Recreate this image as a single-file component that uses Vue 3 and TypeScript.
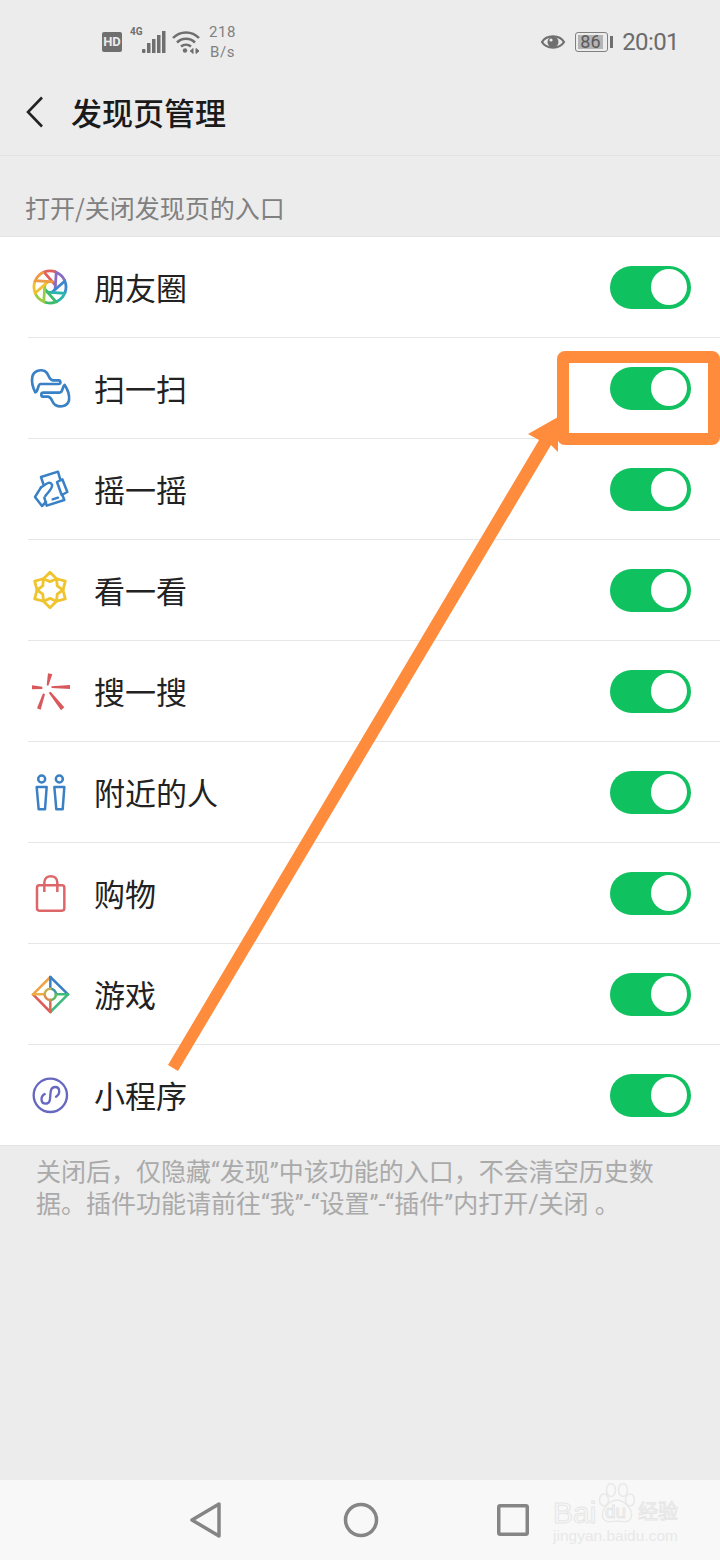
<script setup lang="ts">
interface Entry {
  key: string
  label: string
}

const entries: Entry[] = [
  { key: 'moments', label: '朋友圈' },
  { key: 'scan', label: '扫一扫' },
  { key: 'shake', label: '摇一摇' },
  { key: 'look', label: '看一看' },
  { key: 'search', label: '搜一搜' },
  { key: 'nearby', label: '附近的人' },
  { key: 'shop', label: '购物' },
  { key: 'game', label: '游戏' },
  { key: 'mini', label: '小程序' }
]

const polar = (cx: number, cy: number, r: number, deg: number) => {
  const a = (deg * Math.PI) / 180
  return `${(cx + r * Math.cos(a)).toFixed(2)} ${(cy + r * Math.sin(a)).toFixed(2)}`
}

// 光圈图标的彩色分段
const palette = ['#e2605c', '#8a6cc4', '#3f86cf', '#2bb3b0', '#3dbb6c', '#9ccb45', '#efc030', '#ee9b45']
const blades = palette.map((color, i) => {
  const start = -112 + i * 45
  return {
    color,
    d: `M${polar(22, 22, 6, start + 100)} L${polar(22, 22, 16, start)} A16 16 0 0 1 ${polar(22, 22, 16, start + 45)}`
  }
})

// 看一看的六个花瓣
const petals = [-90, -30, 30, 90, 150, 210].map((deg) =>
  `M${polar(90, 90, 53, deg)} L${polar(90, 90, 39, deg + 30)} L${polar(90, 90, 25, deg)} L${polar(90, 90, 39, deg - 30)} Z`
)
</script>

<template>
  <div class="page">
    <div class="status">
      <span class="hd">HD</span>
      <span class="net">4G</span>
      <svg class="signal" width="24" height="24" viewBox="0 0 24 24" fill="#6f6f6f">
        <rect x="0" y="19" width="3.5" height="4" rx="1" />
        <rect x="5" y="13" width="3.5" height="10" />
        <rect x="10" y="9" width="3.5" height="14" />
        <rect x="15" y="5" width="3.5" height="18" />
        <rect x="20" y="1" width="3.5" height="22" />
      </svg>
      <svg class="wifi" width="28" height="24" viewBox="0 0 28 24" fill="none" stroke="#6f6f6f" stroke-width="2.5">
        <path d="M1 8C8 0.5 20 0.5 27 8" />
        <path d="M5 12.5C10 7.5 18 7.5 23 12.5" />
        <path d="M9 16.5C12 14 16 14 19 16.5" />
        <circle cx="13" cy="20.5" r="2.2" fill="#6f6f6f" stroke="none" />
        <path d="M18 21h3M21 18.5L18.5 21L21 23.5ZM24 18.5V23.5L27 21Z" fill="#6f6f6f" stroke-width="1" />
      </svg>
      <div class="speed"><span>218</span><span>B/s</span></div>
      <div class="status-right">
        <svg width="26" height="20" viewBox="0 0 26 20" fill="none">
          <path d="M2 10C6.5 2.5 19.5 2.5 24 10C19.5 17.5 6.5 17.5 2 10Z" stroke="#6f6f6f" stroke-width="2.2" />
          <circle cx="13" cy="10" r="5.5" fill="#6f6f6f" />
          <circle cx="11" cy="8" r="1.6" fill="#ececec" />
        </svg>
        <div class="battery">
          <div class="cell"><span>86</span></div>
          <i class="tip"></i>
        </div>
        <span class="time">20:01</span>
      </div>
    </div>

    <header class="bar">
      <svg width="18" height="32" viewBox="0 0 18 32" fill="none" stroke="#222" stroke-width="2.6">
        <path d="M16 1.5L2 16L16 30.5" />
      </svg>
      <h1>发现页管理</h1>
    </header>

    <p class="section">打开/关闭发现页的入口</p>

    <ul class="list">
      <li v-for="item in entries" :key="item.key" class="row">
        <svg v-if="item.key === 'moments'" class="icon" viewBox="0 0 44 44" fill="none" stroke-width="2.8">
          <path v-for="b in blades" :key="b.color" :d="b.d" :stroke="b.color" />
        </svg>
        <svg v-else-if="item.key === 'scan'" class="icon" viewBox="24 348 132 132" fill="none" stroke="#3a80c4" stroke-width="8" stroke-linejoin="round">
          <path d="M46 427C38 412 35 392 37 380C40 364 60 357 74 363C88 370 84 388 98 391L116 391C123 392 123 402 116 402L62 402C52 402 56 424 46 427Z" />
          <path d="M134 405C143 418 149 436 147 451C142 470 120 473 106 465C94 458 98 442 84 440L70 440C62 440 62 428 70 428L118 428C130 427 126 410 134 405Z" />
        </svg>
        <svg v-else-if="item.key === 'shake'" class="icon" viewBox="24 651 132 132" fill="none" stroke="#3a80c4" stroke-width="7.5" stroke-linejoin="round" stroke-linecap="round">
          <path d="M70 702L63 681L114 665L120 686" />
          <path d="M111 696L127 688L142 726L125 735Z" />
          <path d="M127 735L133 750L80 767L73 743" />
          <path d="M63 712L45 741L66 768L78 756" />
          <path d="M63 712C76 704 90 690 96 704C99 716 84 726 76 738" />
          <path d="M98 748L114 743" />
        </svg>
        <svg v-else-if="item.key === 'look'" class="icon" viewBox="24 24 132 132" fill="none" stroke="#efc42e" stroke-width="8.5" stroke-linejoin="round">
          <path v-for="p in petals" :key="p" :d="p" />
        </svg>
        <svg v-else-if="item.key === 'search'" class="icon" viewBox="24 327 132 132" fill="#d9585b">
          <path d="M84 340L97 343L85 377L80 376Z" />
          <path d="M94 379L150 375L150 387L95 384Z" />
          <path d="M36 376L67 380L67 387L36 388Z" />
          <path d="M69 400L75 403L62 449L51 445Z" />
          <path d="M86 398L92 395L133 442L123 451Z" />
        </svg>
        <svg v-else-if="item.key === 'nearby'" class="icon" viewBox="24 630 132 132" fill="none" stroke="#3a80c4" stroke-width="7.5" stroke-linejoin="round">
          <circle cx="65" cy="657" r="10.5" />
          <circle cx="118" cy="657" r="10.5" />
          <path d="M50 681H80L75 748H56Z" />
          <path d="M103 681H133L128 748H109Z" />
        </svg>
        <svg v-else-if="item.key === 'shop'" class="icon" viewBox="24 33 132 132" fill="none" stroke="#dd6668" stroke-width="7.5" stroke-linejoin="round">
          <rect x="51" y="76" width="82" height="76" rx="7" />
          <path d="M73 96V68C73 42 112 42 112 68V96" />
        </svg>
        <svg v-else-if="item.key === 'game'" class="icon" viewBox="24 336 132 132" fill="none" stroke-width="7.5" stroke-linejoin="round" stroke-linecap="round">
          <path d="M91 351L39 403" stroke="#eea445" />
          <path d="M91 351L144 403" stroke="#3a80c4" />
          <path d="M144 403L91 456" stroke="#3dbb7c" />
          <path d="M91 456L39 403" stroke="#dd5b5b" />
          <path d="M91 351V386" stroke="#3a80c4" />
          <path d="M39 403H74" stroke="#eeb045" />
          <path d="M108 403H144" stroke="#3dbb7c" />
          <path d="M91 420V456" stroke="#d96a50" />
          <path d="M91 386A17 17 0 0 1 108 403" stroke="#3a9a9c" />
          <path d="M108 403A17 17 0 0 1 91 420" stroke="#5cbb5c" />
          <path d="M91 420A17 17 0 0 1 74 403" stroke="#dd8a50" />
          <path d="M74 403A17 17 0 0 1 91 386" stroke="#c8b050" />
        </svg>
        <svg v-else class="icon" viewBox="24 639 132 132" fill="none" stroke="#6668c0" stroke-width="7" stroke-linecap="round">
          <circle cx="91" cy="706" r="50" />
          <path d="M74 702C60 710 62 731 77 731C91 731 90 718 91 706C92 694 92 681 106 681C120 681 122 702 108 710" />
        </svg>
        <span class="label">{{ item.label }}</span>
        <span class="toggle"><i></i></span>
      </li>
    </ul>

    <p class="note">关闭后，仅隐藏“发现”中该功能的入口，不会清空历史数据。插件功能请前往“我”-“设置”-“插件”内打开/关闭 。</p>

    <nav class="keys">
      <svg width="35" height="38" viewBox="0 0 35 38" fill="none" stroke="#858585" stroke-width="3.5" stroke-linejoin="round">
        <path d="M29 3V35L2 19Z" />
      </svg>
      <svg width="36" height="36" viewBox="0 0 36 36" fill="none" stroke="#858585" stroke-width="3.5">
        <circle cx="18" cy="18" r="15.5" />
      </svg>
      <svg width="32" height="32" viewBox="0 0 32 32" fill="none" stroke="#858585" stroke-width="3.5" stroke-linejoin="round">
        <rect x="1.75" y="1.75" width="28.5" height="28.5" rx="1.5" />
      </svg>
    </nav>

    <!-- 标注层 -->
    <svg class="marks" width="720" height="1560" viewBox="0 0 720 1560">
      <rect x="563" y="357" width="151" height="82" rx="2" fill="none" stroke="#ff8c3c" stroke-width="12" />
      <path d="M168 1065L178 1071L551 445L558 452V417L528 434L539 440Z" fill="#ff8c3c" />
    </svg>

    <div class="mark-wm">
      <svg class="paw" width="40" height="42" viewBox="0 0 40 42" fill="#f8f8f8" stroke="#e8e8e8" stroke-width="1.5">
        <ellipse cx="7" cy="17" rx="4.5" ry="6" />
        <ellipse cx="14" cy="7" rx="4.5" ry="6.5" />
        <ellipse cx="26" cy="7" rx="4.5" ry="6.5" />
        <ellipse cx="33" cy="17" rx="4.5" ry="6" />
        <path d="M20 17C28 17 37 28 34 35C31 41 25 38 20 38C15 38 9 41 6 35C3 28 12 17 20 17Z" />
      </svg>
      <span class="wm-bai">Bai</span>
      <span class="wm-du">du</span>
      <span class="wm-cn">经验</span>
      <span class="wm-url">jingyan.baidu.com</span>
    </div>
  </div>
</template>

<style>
html,
body {
  margin: 0;
  background: #ececec;
}
</style>

<style scoped>
.page {
  position: relative;
  width: 720px;
  height: 1560px;
  display: flex;
  flex-direction: column;
  overflow: hidden;
  background: #ececec;
  font-family: "Noto Sans CJK SC", "Noto Sans", sans-serif;
}

.status {
  height: 71px;
  display: flex;
  align-items: center;
  padding: 13px 41px 0 102px;
  box-sizing: border-box;
  color: #6f6f6f;
  font-family: Roboto, sans-serif;
}

.hd {
  width: 20px;
  height: 20px;
  border-radius: 2px;
  background: #6f6f6f;
  color: #ececec;
  font: 700 13px/20px Roboto, sans-serif;
  text-align: center;
}

.net {
  margin: -20px 0 0 8px;
  width: 12px;
  font: 700 10px/12px Roboto, sans-serif;
}

.wifi {
  margin-left: 6px;
}

.speed {
  display: flex;
  flex-direction: column;
  align-items: center;
  margin-left: 9px;
  font-size: 15px;
  line-height: 20px;
  letter-spacing: 0.6px;
  color: #808080;
}

.status-right {
  margin-left: auto;
  display: flex;
  align-items: center;
}

.battery {
  margin-left: 9px;
  display: flex;
  align-items: center;
}

.cell {
  width: 33px;
  height: 20px;
  border: 1.5px solid #808080;
  border-radius: 3px;
  padding: 1.5px 4px 1.5px 1.5px;
  box-sizing: border-box;
  background: #ececec;
}

.cell span {
  display: block;
  height: 14px;
  background: #b4b4b4;
  color: #5a5a5a;
  font-size: 18px;
  line-height: 14px;
  text-align: center;
}

.tip {
  width: 3px;
  height: 12px;
  margin-left: 2px;
  background: #6f6f6f;
}

.time {
  margin-left: 9px;
  font-size: 24px;
  letter-spacing: -0.6px;
  color: #6b6b6b;
}

.bar {
  height: 85px;
  display: flex;
  align-items: center;
  padding-left: 26px;
  box-sizing: border-box;
  border-bottom: 1px solid #e2e2e2;
}

.bar svg {
  margin-top: -2px;
}

.bar h1 {
  margin: -2px 0 0 27px;
  font-size: 31px;
  font-weight: 500;
  line-height: 40px;
  color: #1a1a1a;
}

.section {
  margin: 0;
  height: 80px;
  padding: 33px 0 0 25px;
  box-sizing: border-box;
  font-size: 25px;
  line-height: 36px;
  color: #808080;
}

.list {
  margin: 0;
  padding: 0;
  list-style: none;
  background: #fff;
  border-top: 1px solid #e4e4e4;
  border-bottom: 1px solid #e4e4e4;
}

.row {
  position: relative;
  height: 101px;
  display: flex;
  align-items: center;
  margin-left: 28px;
  padding-right: 29px;
  box-sizing: border-box;
  border-bottom: 1px solid #e6e6e6;
}

.row:last-child {
  height: 100px;
  border-bottom: 0;
}

.icon {
  width: 44px;
  height: 44px;
  flex: none;
}

.label {
  margin-left: 22px;
  font-size: 31px;
  line-height: 40px;
  color: #222;
}

.toggle {
  margin-left: auto;
  width: 81px;
  height: 43px;
  border-radius: 22px;
  background: #10c160;
  display: flex;
  align-items: center;
  justify-content: flex-end;
  padding-right: 4px;
  box-sizing: border-box;
}

.toggle i {
  width: 36px;
  height: 36px;
  border-radius: 50%;
  background: #fff;
}

.note {
  margin: 0;
  flex: 1;
  padding: 11px 60px 0 36px;
  font-family: Roboto, "Noto Sans CJK SC", sans-serif;
  font-size: 25px;
  line-height: 32px;
  color: #aaa;
}

.keys {
  height: 80px;
  flex: none;
  background: #f8f8f8;
  display: flex;
  align-items: center;
  padding-left: 190px;
  box-sizing: border-box;
  gap: 118px;
}

.marks {
  position: absolute;
  left: 0;
  top: 0;
  pointer-events: none;
}

.mark-wm {
  position: absolute;
  left: 553px;
  top: 1483px;
  width: 130px;
  height: 64px;
  color: #f8f8f8;
}

.paw {
  position: absolute;
  left: 44px;
  top: 0;
}

.wm-bai,
.wm-du,
.wm-cn {
  position: absolute;
  -webkit-text-stroke: 1px #e6e6e6;
  font-family: "Liberation Sans", sans-serif;
}

.wm-bai {
  left: 0;
  top: 14px;
  font-size: 30px;
  line-height: 32px;
}

.wm-du {
  left: 52px;
  top: 17px;
  font-size: 19px;
  line-height: 24px;
}

.wm-cn {
  left: 85px;
  top: 15px;
  font-family: "Noto Sans CJK SC", sans-serif;
  font-size: 20px;
  line-height: 26px;
}

.wm-url {
  position: absolute;
  left: 0;
  top: 44px;
  font-size: 15.5px;
  line-height: 18px;
  white-space: nowrap;
  color: #e8e8e8;
  font-family: "Liberation Sans", sans-serif;
}
</style>
